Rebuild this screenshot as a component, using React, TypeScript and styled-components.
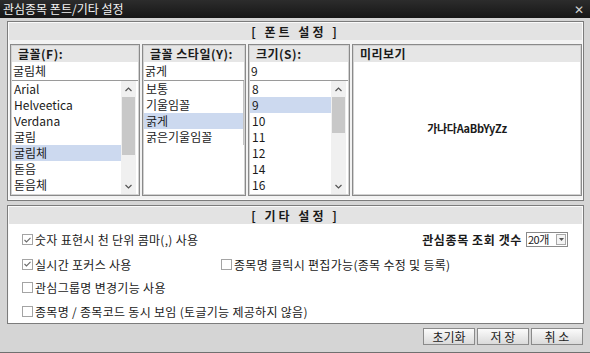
import styled, { createGlobalStyle } from 'styled-components'

const GlobalStyle = createGlobalStyle`
  html, body {
    margin: 0;
    padding: 0;
    background: #d5d5d5;
  }
  body {
    font-family: "Noto Sans CJK KR", "Noto Sans", sans-serif;
    font-size: 12px;
    color: #1a1a1a;
  }
`

const Window = styled.div`
  width: 590px;
  height: 353px;
  box-sizing: border-box;
  background: #d5d5d5;
  display: flex;
  flex-direction: column;
  overflow: hidden;
  border-bottom: 1px solid #707070;
`

const TitleBar = styled.div`
  height: 18px;
  flex: none;
  display: flex;
  align-items: center;
  justify-content: space-between;
  padding: 0 6px 0 3px;
  background: linear-gradient(#2c2c2c, #161616);
  color: #f2f2f2;
  font-size: 12px;
  line-height: 18px;
`

const Close = styled.span`
  font-size: 12px;
  color: #d0d0d0;
`

const Content = styled.div`
  flex: 1;
  display: flex;
  flex-direction: column;
  padding: 3px 6px 0 7px;
`

const Panel = styled.section<{ $h: number }>`
  height: ${({ $h }) => $h}px;
  box-sizing: border-box;
  border: 1px solid #7c7c7c;
  box-shadow: inset 0 0 0 1px #fafafa;
  background: #f3f3f3;
  display: flex;
  flex-direction: column;
  & + & {
    margin-top: 4px;
  }
`

const PanelHeader = styled.div`
  height: 17px;
  flex: none;
  background: #e3e3e3;
  font-weight: bold;
  letter-spacing: 3px;
  text-align: center;
  line-height: 17px;
  margin: 1px 1px 0;
`

const Columns = styled.div`
  flex: 1;
  display: grid;
  grid-template-columns: 130px 104px 102px 1fr;
  column-gap: 2px;
  padding: 4px 1px 4px 2px;
`

const Column = styled.div`
  border: 1px solid #8a8a8a;
  padding: 1px;
  background: #d2d2d2;
  display: flex;
  flex-direction: column;
  min-width: 0;
`

const ColHeader = styled.div`
  height: 16px;
  flex: none;
  background: #e6e6e6;
  font-weight: bold;
  line-height: 16px;
  padding-left: 6px;
  letter-spacing: 0.5px;
`

const Input = styled.div`
  height: 18px;
  flex: none;
  background: #fff;
  line-height: 18px;
  padding-left: 1px;
  border-bottom: 1px solid #9a9a9a;
`

const ListArea = styled.div`
  flex: 1;
  background: #fff;
  display: flex;
  min-height: 0;
`

const List = styled.div<{ $edge?: boolean }>`
  flex: 1;
  align-self: ${({ $edge }) => ($edge ? 'flex-start' : 'stretch')};
  border-right: ${({ $edge }) => ($edge ? '1px solid #c4c4c4' : 'none')};
`

const Item = styled.div<{ $selected?: boolean }>`
  height: 16px;
  line-height: 16px;
  padding-left: 2px;
  white-space: nowrap;
  background: ${({ $selected }) => ($selected ? '#ccd9ef' : 'transparent')};
`

const ScrollBar = styled.div`
  width: 15px;
  margin: 0 2px 0 0;
  background: #f0f0f0;
  display: flex;
  flex-direction: column;
`

const Arrow = styled.div`
  height: 16px;
  flex: none;
  display: flex;
  align-items: center;
  justify-content: center;
`

const Track = styled.div`
  flex: 1;
  display: flex;
  flex-direction: column;
`

const Thumb = styled.div<{ $h: number }>`
  height: ${({ $h }) => $h}px;
  background: #c8c8c8;
  margin: 0 1px;
`

const Preview = styled.div`
  flex: 1;
  background: #fff;
  display: flex;
  align-items: center;
  justify-content: center;
  font-weight: bold;
  font-size: 11px;
  letter-spacing: -0.3px;
`

const EtcBody = styled.div`
  flex: 1;
  background: #fff;
  margin: 0 1px 1px;
  padding: 3px 14px 0 13px;
  display: flex;
  flex-direction: column;
  letter-spacing: 0.3px;
`

const Row = styled.div<{ $h: number }>`
  height: ${({ $h }) => $h}px;
  display: flex;
  align-items: center;
  justify-content: space-between;
`

const SplitRow = styled(Row)`
  display: grid;
  grid-template-columns: 199px 1fr;
`

const CheckLabel = styled.label`
  display: inline-flex;
  align-items: center;
  gap: 2px;
  white-space: nowrap;
`

const Box = styled.span`
  width: 9px;
  height: 9px;
  border: 1px solid #a4a4a4;
  background: #fff;
  display: inline-flex;
  align-items: center;
  justify-content: center;
`

const CountGroup = styled.div`
  display: flex;
  align-items: center;
  gap: 4px;
`

const BoldLabel = styled.span`
  font-weight: bold;
  letter-spacing: 0.6px;
`

const Select = styled.div`
  width: 40px;
  height: 13px;
  border: 1px solid #8a8a8a;
  background: #fff;
  display: flex;
  align-items: center;
  font-size: 11px;
  line-height: 13px;
`

const SelectText = styled.span`
  flex: 1;
  padding-left: 1px;
  letter-spacing: -0.5px;
`

const SelectButton = styled.span`
  width: 10px;
  height: 11px;
  margin-right: 1px;
  border: 1px solid #a8a8a8;
  box-sizing: border-box;
  display: flex;
  align-items: center;
  justify-content: center;
  background: #f4f4f4;
`

const Footer = styled.div`
  display: flex;
  justify-content: flex-end;
  gap: 2px;
  margin-top: 4px;
  padding-right: 1px;
`

const Button = styled.button`
  width: 52px;
  height: 17px;
  padding: 0;
  border: 1px solid #8a8a8a;
  background: linear-gradient(#fbfbfb, #dadada);
  font-family: inherit;
  font-size: 12px;
  line-height: 15px;
  color: #222;
`

function Check() {
  return (
    <svg width="7" height="6" viewBox="0 0 7 6">
      <polyline points="0.5,3 2.5,5 6.5,0.8" fill="none" stroke="#6a6a6a" strokeWidth="1.1" />
    </svg>
  )
}

function CheckItem({ checked, label }: { checked?: boolean; label: string }) {
  return (
    <CheckLabel>
      <Box>{checked && <Check />}</Box>
      {label}
    </CheckLabel>
  )
}

function Chevron({ down }: { down?: boolean }) {
  return (
    <svg width="7" height="5" viewBox="0 0 7 5">
      <polyline
        points={down ? '0.5,1 3.5,4 6.5,1' : '0.5,4 3.5,1 6.5,4'}
        fill="none"
        stroke="#555"
        strokeWidth="1.2"
      />
    </svg>
  )
}

function Scroll({ thumb, before }: { thumb: number; before: number }) {
  return (
    <ScrollBar>
      <Arrow>
        <Chevron />
      </Arrow>
      <Track>
        <div style={{ height: before }} />
        <Thumb $h={thumb} />
      </Track>
      <Arrow>
        <Chevron down />
      </Arrow>
    </ScrollBar>
  )
}

const fonts = ['Arial', 'Helveetica', 'Verdana', '굴림', '굴림체', '돋음', '돋음체']
const styles = ['보통', '기울임꼴', '굵게', '굵은기울임꼴']
const sizes = ['8', '9', '10', '11', '12', '14', '16']

export default function App() {
  return (
    <>
      <GlobalStyle />
      <Window>
        <TitleBar>
          <span>관심종목 폰트/기타 설정</span>
          <Close>✕</Close>
        </TitleBar>
        <Content>
          <Panel $h={180}>
            <PanelHeader>[ 폰트 설정 ]</PanelHeader>
            <Columns>
              <Column>
                <ColHeader>글꼴(F):</ColHeader>
                <Input>굴림체</Input>
                <ListArea>
                  <List>
                    {fonts.map((f) => (
                      <Item key={f} $selected={f === '굴림체'}>
                        {f}
                      </Item>
                    ))}
                  </List>
                  <Scroll before={0} thumb={58} />
                </ListArea>
              </Column>
              <Column>
                <ColHeader>글꼴 스타일(Y):</ColHeader>
                <Input>굵게</Input>
                <ListArea>
                  <List $edge>
                    {styles.map((s) => (
                      <Item key={s} $selected={s === '굵게'}>
                        {s}
                      </Item>
                    ))}
                  </List>
                </ListArea>
              </Column>
              <Column>
                <ColHeader>크기(S):</ColHeader>
                <Input>9</Input>
                <ListArea>
                  <List>
                    {sizes.map((s) => (
                      <Item key={s} $selected={s === '9'}>
                        {s}
                      </Item>
                    ))}
                  </List>
                  <Scroll before={0} thumb={36} />
                </ListArea>
              </Column>
              <Column>
                <ColHeader>미리보기</ColHeader>
                <Preview>가나다AaBbYyZz</Preview>
              </Column>
            </Columns>
          </Panel>
          <Panel $h={119}>
            <PanelHeader>[ 기타 설정 ]</PanelHeader>
            <EtcBody>
              <Row $h={25}>
                <CheckItem checked label="숫자 표현시 천 단위 콤마(,) 사용" />
                <CountGroup>
                  <BoldLabel>관심종목 조회 갯수</BoldLabel>
                  <Select>
                    <SelectText>20개</SelectText>
                    <SelectButton>
                      <svg width="5" height="3" viewBox="0 0 5 3">
                        <polygon points="0,0 5,0 2.5,3" fill="#555" />
                      </svg>
                    </SelectButton>
                  </Select>
                </CountGroup>
              </Row>
              <SplitRow $h={24}>
                <CheckItem checked label="실시간 포커스 사용" />
                <CheckItem label="종목명 클릭시 편집가능(종목 수정 및 등록)" />
              </SplitRow>
              <Row $h={23}>
                <CheckItem label="관심그룹명 변경기능 사용" />
              </Row>
              <Row $h={24}>
                <CheckItem label="종목명 / 종목코드 동시 보임 (토글기능 제공하지 않음)" />
              </Row>
            </EtcBody>
          </Panel>
          <Footer>
            <Button>초기화</Button>
            <Button>저 장</Button>
            <Button>취 소</Button>
          </Footer>
        </Content>
      </Window>
    </>
  )
}
